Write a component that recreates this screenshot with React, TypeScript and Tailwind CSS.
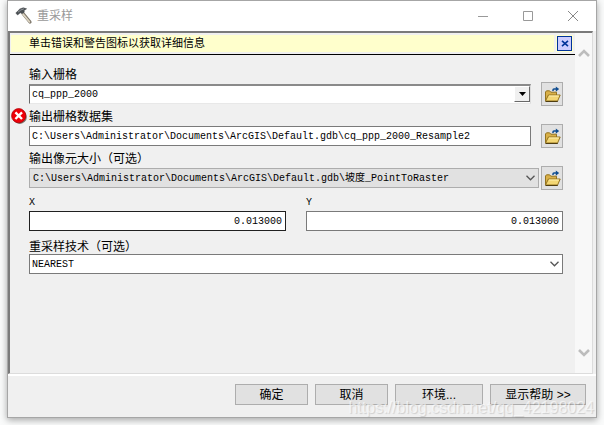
import React, { useState } from 'react';

const CJK = "font-['Liberation_Sans','Noto_Sans_CJK_SC',sans-serif]";
const MONO = "font-['Liberation_Mono','Noto_Sans_CJK_SC',monospace]";

const techniques = ['NEAREST', 'BILINEAR', 'CUBIC', 'MAJORITY'];

function HammerIcon() {
  return (
    <svg width="18" height="18" viewBox="0 0 18 18" aria-hidden="true">
      <path d="M8 6.5 L15 15" stroke="#7d766a" strokeWidth="3.2" strokeLinecap="round" />
      <path d="M7.6 6.6 L14.4 14.8" stroke="#ddd5c2" strokeWidth="1.7" strokeLinecap="round" />
      <path d="M0.8 6 L2.6 8 L5.2 5.8 L7.6 6.6 L9.4 5 L8.8 3.8 L11.6 1.8 L8.2 0.8 L4.8 2 L2.6 4.2 Z" fill="#4b5054" stroke="#3b3f42" strokeWidth="0.5" />
      <path d="M3 5.2 L5.8 3 L9 1.8" stroke="#a5aaad" strokeWidth="0.8" fill="none" />
    </svg>
  );
}

function FolderIcon() {
  return (
    <svg width="17" height="17" viewBox="0 0 17 17" aria-hidden="true">
      <path d="M1.5 15 V6 L2.5 4.8 H5.6 L6.8 6.2 H12.5 V9" fill="#d9b048" stroke="#93731f" />
      <path d="M1.5 15 L4.4 9 H16.2 L13.6 15 Z" fill="#f3d673" stroke="#93731f" />
      <path d="M5 10 H14.8" stroke="#fff0b0" />
      <path d="M1.5 15.5 H13.8" stroke="#4f3d10" />
      <path d="M9 5 V4 Q9 3 10 3 H12.5" stroke="#0f4c8f" strokeWidth="1.5" fill="none" />
      <path d="M11.8 0.4 L15.2 3 L11.8 5.8 Z" fill="#0f4c8f" />
    </svg>
  );
}

function ErrorIcon() {
  return (
    <svg width="16" height="16" viewBox="0 0 16 16" role="img" aria-label="错误">
      <circle cx="8.8" cy="8.9" r="7" fill="#77736b" />
      <circle cx="7.7" cy="7.7" r="7.1" fill="#ee0008" stroke="#b00008" strokeWidth="0.8" />
      <path d="M4.4 4.4 L11 11 M11 4.4 L4.4 11" stroke="#fff" strokeWidth="2.4" />
    </svg>
  );
}

function Chevron({ up = false, big = false }: { up?: boolean; big?: boolean }) {
  if (big) {
    return (
      <svg width="12" height="9" viewBox="0 0 12 9" aria-hidden="true">
        <path d={up ? 'M1 7 L6 2 L11 7' : 'M1 2 L6 7 L11 2'} fill="none" stroke="#bdbdbd" strokeWidth="2.6" />
      </svg>
    );
  }
  return (
    <svg width="9" height="6" viewBox="0 0 9 6" aria-hidden="true">
      <path d="M0.5 0.8 L4.5 4.8 L8.5 0.8" fill="none" stroke="#555" strokeWidth="1.3" />
    </svg>
  );
}

function FieldLabel({ htmlFor, error, children }: { htmlFor: string; error?: boolean; children: React.ReactNode }) {
  return (
    <div className="flex h-4 items-start">
      <span className="w-[19px] shrink-0 pl-px">{error && <ErrorIcon />}</span>
      <label htmlFor={htmlFor} className="text-[12px] leading-[18px]">{children}</label>
    </div>
  );
}

function BrowseButton({ label }: { label: string }) {
  return (
    <button type="button" aria-label={label} className="flex h-6 w-[22px] shrink-0 items-center justify-center border border-[#adadad] bg-[#e1e1e1]">
      <FolderIcon />
    </button>
  );
}

const footerButton = 'h-[21px] border border-[#adadad] bg-[#e1e1e1] pt-px text-[12px] leading-4';

export default function App() {
  const [output, setOutput] = useState('C:\\Users\\Administrator\\Documents\\ArcGIS\\Default.gdb\\cq_ppp_2000_Resample2');
  const [cellX, setCellX] = useState('0.013000');
  const [cellY, setCellY] = useState('0.013000');
  const [technique, setTechnique] = useState('NEAREST');
  const [showHint, setShowHint] = useState(true);

  return (
    <div className={`flex min-h-screen flex-col bg-[#fafbfb] px-[7px] pb-[7px] text-black ${CJK}`}>
      <div className="relative flex flex-1 flex-col border border-[#a6a6a6] bg-[#f0f0f0] shadow-[0_2px_7px_rgba(0,0,0,0.35)]">
        <header className="flex h-[30px] items-center bg-white pl-[7px] text-[#999]">
          <HammerIcon />
          <h1 className="ml-1 flex-1 text-[12px] leading-4">重采样</h1>
          <button type="button" aria-label="最小化" className="flex h-full w-[45px] items-center justify-center">
            <svg width="10" height="10" viewBox="0 0 10 10"><path d="M0 5.5 H10" stroke="#999" /></svg>
          </button>
          <button type="button" aria-label="最大化" className="flex h-full w-[45px] items-center justify-center">
            <svg width="10" height="10" viewBox="0 0 10 10"><path d="M0.5 0.5 H9.5 V9.5 H0.5 Z" fill="none" stroke="#999" /></svg>
          </button>
          <button type="button" aria-label="关闭" className="flex h-full w-[46px] items-center justify-center">
            <svg width="10" height="10" viewBox="0 0 10 10"><path d="M0 0 L10 10 M10 0 L0 10" stroke="#888" /></svg>
          </button>
        </header>

        <div className="flex flex-1 border-b-2 border-white pr-[3px]">
          <div className="flex flex-1 border-2 border-r border-b border-t-[#7a7a7a] border-r-[#dcdcdc] border-b-[#dcdcdc] border-l-[#7a7a7a]">
            <main className="min-w-0 flex-1">
              {showHint && (
                <div className="flex h-[22px] items-center border-b border-black pl-px">
                  <p className="h-[17px] flex-1 bg-[#ffffcc] pl-[18px] text-[11px] leading-4">单击错误和警告图标以获取详细信息</p>
                  <div className="mx-0.5 bg-[#ffffcc] p-px">
                    <button type="button" aria-label="关闭提示" onClick={() => setShowHint(false)} className="flex h-[15px] w-[15px] items-center justify-center border border-[#003399] bg-[#ccccff]">
                      <svg width="8" height="7" viewBox="0 0 8 7"><path d="M1 0.8 L7 6.2 M7 0.8 L1 6.2" stroke="#003399" strokeWidth="1.6" /></svg>
                    </button>
                  </div>
                </div>
              )}

              <form className="pt-[11px] pr-3" onSubmit={(e) => e.preventDefault()}>
                <div className="mb-0.5">
                  <FieldLabel htmlFor="input-raster">输入栅格</FieldLabel>
                  <div className="flex items-center pl-[19px]">
                    <div className="relative mr-2.5 flex-1">
                      <select id="input-raster" className={`block h-5 w-full appearance-none border border-t-2 border-t-[#8a8a8a] border-r-[#dcdcdc] border-b-[#e8e8e8] border-l-[#696969] bg-white pl-0.5 text-[10px] ${MONO}`}>
                        <option>cq_ppp_2000</option>
                      </select>
                      <span className="pointer-events-none absolute top-0.5 right-px flex h-4 w-4 items-center justify-center border border-t-white border-r-[#696969] border-b-[#696969] border-l-white bg-[#f0f0f0]">
                        <svg width="7" height="4" viewBox="0 0 7 4"><path d="M0 0 H7 L3.5 4 Z" /></svg>
                      </span>
                    </div>
                    <BrowseButton label="浏览输入栅格" />
                  </div>
                </div>

                <div className="mb-0.5">
                  <FieldLabel htmlFor="output-raster" error>输出栅格数据集</FieldLabel>
                  <div className="flex items-center pl-[19px]">
                    <input id="output-raster" value={output} onChange={(e) => setOutput(e.target.value)} className={`mr-2.5 h-5 min-w-0 flex-1 border border-[#7a7a7a] bg-white px-0.5 text-[10px] ${MONO}`} />
                    <BrowseButton label="浏览输出栅格数据集" />
                  </div>
                </div>

                <div>
                  <FieldLabel htmlFor="cell-size">输出像元大小（可选）</FieldLabel>
                  <div className="flex items-center pl-[19px]">
                    <div className="relative mr-0.5 flex-1">
                      <select id="cell-size" className={`block h-5 w-full appearance-none border border-[#adadad] bg-[#e1e1e1] pl-[3px] text-[10px] ${MONO}`}>
                        <option>{'C:\\Users\\Administrator\\Documents\\ArcGIS\\Default.gdb\\坡度_PointToRaster'}</option>
                      </select>
                      <span className="pointer-events-none absolute inset-y-0 right-1 flex items-center"><Chevron /></span>
                    </div>
                    <BrowseButton label="浏览像元大小" />
                  </div>
                </div>

                <div className="mt-1 flex gap-5 pl-[19px]">
                  <div className="flex-1">
                    <label htmlFor="cell-x" className={`block h-[17px] text-[10px] leading-[18px] ${MONO}`}>X</label>
                    <input id="cell-x" value={cellX} onChange={(e) => setCellX(e.target.value)} className={`block h-5 w-full border border-[#202020] bg-white px-[3px] text-right text-[10px] ${MONO}`} />
                  </div>
                  <div className="flex-1">
                    <label htmlFor="cell-y" className={`block h-[17px] text-[10px] leading-[18px] ${MONO}`}>Y</label>
                    <input id="cell-y" value={cellY} onChange={(e) => setCellY(e.target.value)} className={`block h-5 w-full border border-[#7a7a7a] bg-white px-[3px] text-right text-[10px] ${MONO}`} />
                  </div>
                </div>

                <div className="mt-[7px]">
                  <FieldLabel htmlFor="technique">重采样技术（可选）</FieldLabel>
                  <div className="relative ml-[19px]">
                    <select id="technique" value={technique} onChange={(e) => setTechnique(e.target.value)} className={`block h-5 w-full appearance-none border border-[#7a7a7a] bg-white pl-0.5 text-[10px] ${MONO}`}>
                      {techniques.map((t) => (
                        <option key={t} value={t}>{t}</option>
                      ))}
                    </select>
                    <span className="pointer-events-none absolute inset-y-0 right-1 flex items-center"><Chevron /></span>
                  </div>
                </div>
              </form>
            </main>

            <div className="flex w-[17px] shrink-0 flex-col items-center justify-between bg-[#f8f8f8] py-4">
              <button type="button" aria-label="向上滚动"><Chevron up big /></button>
              <button type="button" aria-label="向下滚动"><Chevron big /></button>
            </div>
          </div>
        </div>

        <footer className="flex h-[41px] justify-end gap-[7px] pt-2 pr-2.5">
          <button type="submit" className={`w-[73px] ${footerButton}`}>确定</button>
          <button type="button" className={`w-[73px] ${footerButton}`}>取消</button>
          <button type="button" className={`w-[88px] ${footerButton}`}>环境...</button>
          <button type="button" className={`w-24 ${footerButton}`}>显示帮助 &gt;&gt;</button>
        </footer>

        <span className="pointer-events-none absolute right-0.5 bottom-0 text-[16px] leading-[18px] text-white/60 [text-shadow:1px_1px_1px_rgba(0,0,0,0.14)]">
          https://blog.csdn.net/qq_42198024
        </span>
      </div>
    </div>
  );
}
